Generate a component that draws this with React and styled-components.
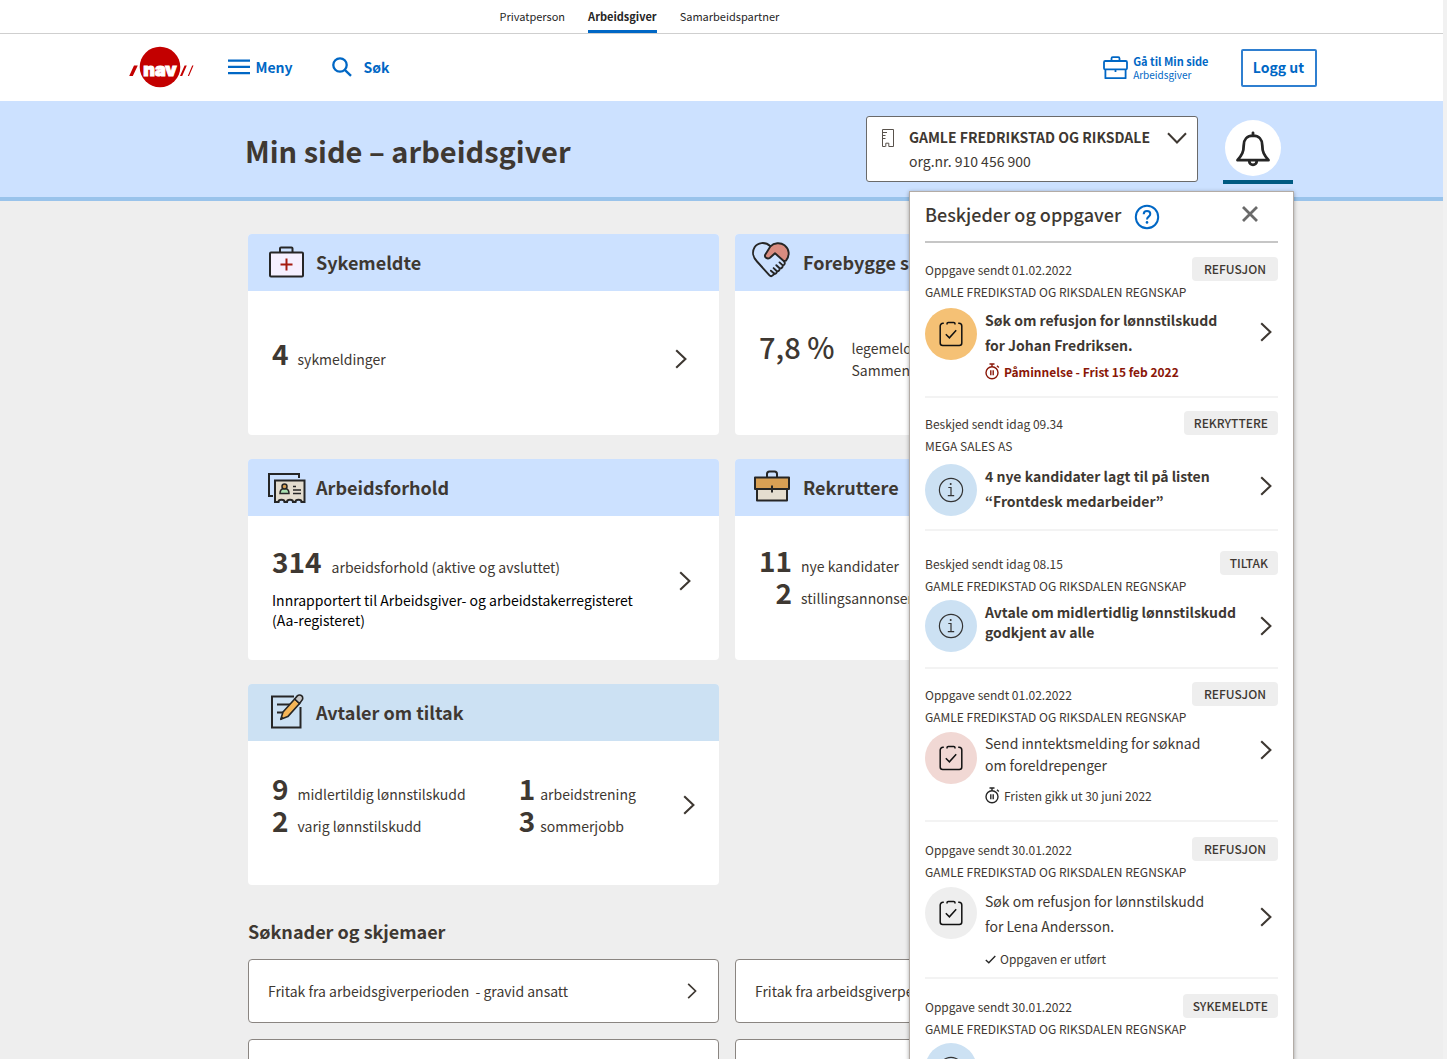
import React from "react";
import styled, { createGlobalStyle, css } from "styled-components";

const font = '"Source Sans Pro", "Noto Sans CJK KR", "Noto Sans", sans-serif';
const ink = "#3e3832";
const blue = "#0067c5";

const GlobalStyle = createGlobalStyle`
  *, *::before, *::after { box-sizing: border-box; }
  body { margin: 0; background: #f1f1f1; color: ${ink}; font-family: ${font}; font-size: 14px; }
  h1, h2, h3, p, ul { margin: 0; padding: 0; font-weight: inherit; }
  ul { list-style: none; }
  a { color: inherit; text-decoration: none; }
  button { font: inherit; color: inherit; cursor: pointer; }
  svg { display: block; flex: none; overflow: visible; }
`;

const Page = styled.div`
  height: 100vh;
  margin-right: 4px;
  overflow-x: hidden;
  overflow-y: auto;
  scrollbar-width: none;
  background: #eeeeee;
`;

/* ---------- Site header ---------- */

const TopBar = styled.div`
  background: #fff;
  border-bottom: 1px solid #cfcfcf;
`;

const HeaderInner = styled.div`
  display: flex;
  align-items: center;
  max-width: 1190px;
  margin: 0 auto;
`;

const Tabs = styled.nav`
  display: flex;
  gap: 23px;
  padding-left: 373px;
`;

const Tab = styled.a`
  height: 33px;
  line-height: 33px;
  font-size: 11px;
  color: #262626;
  border-bottom: 3px solid transparent;
  ${(p) => p.$active && css`
    font-weight: 700;
    border-bottom-color: ${blue};
  `}
`;

const SiteHeader = styled.header`
  background: #fff;
  color: ${blue};
`;

const SiteRow = styled(HeaderInner)`
  height: 67px;
`;

const HeaderButton = styled.button`
  display: flex;
  align-items: center;
  gap: ${(p) => p.$gap}px;
  margin-left: ${(p) => p.$space}px;
  padding: 0 0 2px;
  border: 0;
  background: none;
  font-size: 14px;
  font-weight: 700;
`;

const MySide = styled.a`
  display: flex;
  align-items: center;
  gap: 5px;
  margin-left: auto;
  font-size: 10px;
  line-height: 13px;
`;

const MySideTitle = styled.span`
  display: block;
  font-size: 11px;
  font-weight: 700;
`;

const LogoutButton = styled.button`
  width: 76px;
  height: 38px;
  margin-left: 32px;
  padding: 0 0 2px;
  border: 2px solid #2f7fd0;
  border-radius: 2px;
  background: #fff;
  color: ${blue};
  font-size: 14px;
  font-weight: 700;
`;

/* ---------- Banner ---------- */

const Banner = styled.div`
  display: flex;
  align-items: flex-start;
  height: 100px;
  padding: 15px 150px 0 245px;
  background: #cce1ff;
  border-bottom: 4px solid #99c3eb;
`;

const PageTitle = styled.h1`
  margin-right: auto;
  font-size: 29px;
  line-height: 68px;
  font-weight: 700;
  white-space: nowrap;
`;

const OrgPicker = styled.button`
  display: flex;
  align-items: flex-start;
  width: 332px;
  height: 66px;
  padding: 8px 10px 0 15px;
  border: 1px solid #6a6a6a;
  border-radius: 3px;
  background: #fff;
  text-align: left;
  line-height: 24px;
  white-space: nowrap;
`;

const OrgText = styled.span`
  flex: 1;
  margin-left: 15px;
`;

const OrgName = styled.strong`
  display: block;
  font-weight: 700;
`;

const IconSlot = styled.span`
  display: flex;
  align-items: center;
  height: 26px;
`;

const BellArea = styled.div`
  position: relative;
  margin-left: 25px;
`;

const BellButton = styled.button`
  display: block;
  width: 70px;
  height: 68px;
  padding: 4px 0 0 2px;
  border: 0;
  border-bottom: 4px solid #005b82;
  background: none;
`;

const BellCircle = styled.span`
  display: flex;
  align-items: center;
  justify-content: center;
  width: 56px;
  height: 56px;
  margin-bottom: 4px;
  border-radius: 50%;
  background: #fff;
`;

/* ---------- Notification panel ---------- */

const Panel = styled.section`
  position: absolute;
  top: calc(100% + 7px);
  right: -1px;
  z-index: 5;
  width: 385px;
  padding: 0 15px;
  background: #fff;
  border: 1px solid #b3aca6;
  box-shadow: 0 1px 4px rgba(0, 0, 0, 0.35);
`;

const PanelHeader = styled.div`
  display: flex;
  align-items: center;
  height: 51px;
  padding: 0 19px 6px 0;
  border-bottom: 2px solid #c6c6c6;
`;

const PanelTitle = styled.h2`
  font-size: 18px;
  line-height: 24px;
  font-weight: 500;
`;

const IconButton = styled.button`
  display: flex;
  margin-left: ${(p) => p.$space};
  padding: ${(p) => p.$lower || 0}px 0 0;
  border: 0;
  background: none;
`;

const Message = styled.li`
  padding: ${(p) => p.$top}px 0 ${(p) => p.$bottom}px;
  border-bottom: 2px solid #f3f3f3;
`;

const MessageMeta = styled.div`
  display: flex;
  align-items: center;
  justify-content: space-between;
  height: 24px;
  font-size: 12px;
`;

const Tag = styled.span`
  min-width: ${(p) => (p.$wide ? "86px" : "0")};
  padding: 0 10px;
  border-radius: 4px;
  background: #eeeeee;
  font-size: 12px;
  line-height: 24px;
  font-weight: 500;
  text-align: center;
`;

const MessageOrg = styled.p`
  font-size: 12px;
  line-height: 22px;
  white-space: nowrap;
`;

const MessageLink = styled.a`
  display: flex;
  align-items: flex-start;
  margin-top: ${(p) => p.$gap}px;
  padding-right: 6px;
`;

const circleColors = {
  orange: "#f5c175",
  blue: "#cce1f3",
  red: "#f1d8d4",
  grey: "#eeeeee",
};

const MessageIcon = styled.span`
  display: flex;
  align-items: center;
  justify-content: center;
  flex: none;
  width: 52px;
  height: 52px;
  border-radius: 50%;
  background: ${(p) => circleColors[p.$color]};
`;

const MessageBody = styled.div`
  flex: 1;
  padding: ${(p) => p.$inset}px 0 0 8px;
`;

const MessageTitle = styled.h3`
  font-size: 14px;
  line-height: ${(p) => p.$line}px;
  font-weight: ${(p) => (p.$read ? 400 : 700)};
  white-space: pre-line;
`;

const MessageStatus = styled.p`
  display: flex;
  align-items: center;
  gap: 4px;
  margin-top: ${(p) => (p.$urgent ? 4 : 10)}px;
  font-size: 12px;
  line-height: 20px;
  ${(p) => p.$urgent && css`
    color: #8a1708;
    font-weight: 700;
  `}
`;

const MessageArrow = styled.span`
  margin-top: ${(p) => p.$drop}px;
`;

/* ---------- Cards ---------- */

const Content = styled.main`
  padding: 33px 237px 0 248px;
`;

const CardGrid = styled.div`
  display: grid;
  grid-template-columns: 1fr 1fr;
  gap: 24px 16px;
`;

const Card = styled.article`
  overflow: hidden;
  border-radius: 4px;
  background: #fff;
`;

const CardHeader = styled.div`
  display: flex;
  align-items: center;
  gap: 12px;
  height: 57px;
  padding: 0 20px 1px;
  background: ${(p) => (p.$muted ? "#cce1f3" : "#cce1ff")};
`;

const CardIcon = styled.span`
  display: flex;
  justify-content: center;
  width: 36px;
`;

const CardTitle = styled.h2`
  font-size: 18px;
  line-height: 26px;
  font-weight: 700;
  white-space: nowrap;
`;

const CardBody = styled.a`
  display: flex;
  align-items: flex-start;
  height: 144px;
  padding: ${(p) => p.$top}px ${(p) => p.$end}px 0 24px;
`;

const CardArrow = styled.span`
  align-self: flex-start;
  margin-left: auto;
  padding-top: ${(p) => p.$drop}px;
`;

const StatList = styled.div`
  display: grid;
  grid-template-columns: auto auto;
  align-items: ${(p) => (p.$block ? "start" : "baseline")};
  justify-content: start;
  column-gap: ${(p) => p.$gap}px;
  margin-right: ${(p) => p.$after || 0}px;
`;

const StatNumber = styled.strong`
  font-size: ${(p) => (p.$light ? 29 : 28)}px;
  line-height: 31px;
  font-weight: ${(p) => (p.$light ? 500 : 700)};
  text-align: right;
  white-space: nowrap;
`;

const StatLabel = styled.span`
  padding-top: ${(p) => (p.$block ? 6 : 0)}px;
  font-size: 14px;
  line-height: 22px;
  white-space: pre;
`;

const StatNote = styled.p`
  margin-top: 12px;
  color: #000;
  font-size: 14px;
  line-height: 20px;
`;

const FormsTitle = styled.h2`
  margin: 33px 0 14px;
  font-size: 18px;
  line-height: 27px;
  font-weight: 700;
`;

const FormGrid = styled.div`
  display: grid;
  grid-template-columns: 1fr 1fr;
  gap: 16px;
`;

const FormLink = styled.a`
  display: flex;
  align-items: center;
  justify-content: space-between;
  height: 64px;
  padding: 0 21px 1px 19px;
  border: 1px solid #8a8581;
  border-radius: 4px;
  background: #fff;
  white-space: pre;
`;

/* ---------- Icons ---------- */

const Chevron = ({ w = 12, h = 20 }) => (
  <svg width={w} height={h} viewBox="0 0 12 20" fill="none" stroke={ink} strokeWidth="2.1">
    <path d="M1.2 1.2 10.4 10 1.2 18.8" />
  </svg>
);

const ChevronDown = () => (
  <svg width="20" height="12" viewBox="0 0 20 12" fill="none" stroke={ink} strokeWidth="2">
    <path d="M1 1.3 10 10.5 19 1.3" />
  </svg>
);

const Logo = () => (
  <svg width="66" height="42" viewBox="-1 1 66 42" role="img" aria-label="nav">
    <circle cx="32" cy="21" r="20.3" fill="#c30000" />
    <path d="M6 19.5h3.8L4.8 30H1.2zM56.6 19.5h2.2L54.2 30H52zM64.2 19.5h1.3L61 30h-1.2z" fill="#c30000" />
    <text x="32" y="29.5" textAnchor="middle" fill="#fff" stroke="#fff" strokeWidth="1" fontFamily="Inter, sans-serif" fontWeight="900" fontSize="18">nav</text>
  </svg>
);

const MenuIcon = () => (
  <svg width="22" height="16" viewBox="0 0 22 16" fill={blue}>
    <path d="M0 .5h22v2.2H0zM0 6.8h22V9H0zM0 13.1h22v2.2H0z" />
  </svg>
);

const SearchIcon = () => (
  <svg width="20" height="20" viewBox="0 0 20 20" fill="none" stroke={blue} strokeWidth="2.3">
    <circle cx="8" cy="8" r="6.7" />
    <path d="m12.8 12.8 6.2 6" />
  </svg>
);

const BriefcaseLine = () => (
  <svg width="25" height="24" viewBox="0 0 25 24" fill="none" stroke={blue} strokeWidth="1.8" strokeLinejoin="round">
    <rect x="1" y="5" width="23" height="8.4" rx="1.2" />
    <path d="M2.4 13.4V22.2h20.2V13.4M8.5 5V2.4q0-1.2 1.2-1.2h5.6q1.2 0 1.2 1.2V5M12.5 13v3" />
  </svg>
);

const BuildingIcon = () => (
  <svg width="12" height="18" viewBox="0 0 12 18" fill="none" stroke="#59524c" strokeWidth="1">
    <path d="M3.5 17.5H.5V.5h11v17H6.8v-3.3H3.8v3.3M.5 3.5H5M.5 6.5h3M.5 9.5h3" />
  </svg>
);

const BellIcon = () => (
  <svg width="36" height="36" viewBox="0 -1 36 36" fill="none" stroke="#262626" strokeWidth="2.8" strokeLinejoin="round" strokeLinecap="round">
    <path d="M18 1.8v3M18 4.6c-6 0-9.3 4.3-9.3 9.8 0 6.5-1.7 9.6-6.2 14.8h31c-4.5-5.2-6.2-8.3-6.2-14.8 0-5.5-3.3-9.8-9.3-9.8z" />
    <path d="M14.3 30.2a3.7 3.7 0 0 0 7.4 0" />
  </svg>
);

const HelpIcon = () => (
  <svg width="26" height="26" viewBox="0 0 26 26" fill="none" stroke={blue} strokeWidth="2">
    <circle cx="13" cy="13" r="11.2" />
    <path d="M9.7 10.3c0-2 1.4-3.3 3.3-3.3s3.3 1.2 3.3 3c0 2.6-3.3 2.7-3.3 5.5" />
    <circle cx="13" cy="18.4" r="1.3" fill={blue} stroke="none" />
  </svg>
);

const CloseIcon = () => (
  <svg width="18" height="18" viewBox="0 0 18 18" stroke="#6a6a6a" strokeWidth="2.8">
    <path d="m2 2 14 14M16 2 2 16" />
  </svg>
);

const TaskIcon = () => (
  <svg width="24" height="26" viewBox="0 0 24 26" fill="none" stroke="#111" strokeWidth="1.5">
    <path d="M4.8 2.3H4A2.8 2.8 0 0 0 1.2 5.1V22A2.5 2.5 0 0 0 3.7 24.5H20.3A2.5 2.5 0 0 0 22.8 22V5.1A2.8 2.8 0 0 0 20 2.3H19.2" />
    <path d="M8 3.6V2.8Q8 1.5 9.3 1.5H14.7Q16 1.5 16 2.8V3.6M6.8 13.3l3.6 3.5 6.8-7.6" />
  </svg>
);

const InfoIcon = () => (
  <svg width="26" height="26" viewBox="0 0 26 26" fill="none" stroke="#333" strokeWidth="1.2">
    <circle cx="13" cy="13" r="11.6" />
    <path d="M10.3 10.5H13V18.6M9.8 18.6h6.4" />
    <circle cx="12.7" cy="7" r="1" fill="#333" stroke="none" />
  </svg>
);

const StopwatchIcon = ({ color }) => (
  <svg width="15" height="17" viewBox="0 1 15 17" fill="none" stroke={color} strokeWidth="1.4">
    <circle cx="7" cy="9.8" r="6" />
    <path d="M4.5 1h5M7 1v2.8M12 2.8l1.8 1.7M5.8 7.3v5M8.2 7.3v5" />
  </svg>
);

const CheckIcon = () => (
  <svg width="11" height="9" viewBox="0 0 11 9" fill="none" stroke="#262626" strokeWidth="1.4">
    <path d="m.8 5 3 2.7L10.3 1" />
  </svg>
);

const FirstAidIcon = () => (
  <svg width="36" height="32" viewBox="0 0 36 32" fill="none" stroke="#262626" strokeWidth="2" strokeLinejoin="round">
    <path d="M12 6.5V2.5Q12 1.5 13 1.500H23.500Q24.500 1.500 24.500 2.500V6.500" />
    <rect x="2" y="6.500" width="33" height="24" rx="1" fill="#f5f0ff" />
    <path d="M18.500 12.500v12M12.500 18.500h12" stroke="#a51b10" />
  </svg>
);

const HandshakeHeart = () => (
  <svg width="38" height="36" viewBox="2 2 38 36" fill="none" stroke="#262626" strokeWidth="1.9" strokeLinejoin="round" strokeLinecap="round">
    <path d="M18.5 4.3C13-.8 5.5.6 2.6 5.3-.2 10 1 15.500 5 19.500L17.300 33.200Q19 35 20.700 33.400L22.500 31.700" />
    <path fill="#d98c80" d="M18.500 4.300C22 .6 28.500.2 32.500 3.200 37.500 7 38 13.600 34 18.600L32 19.200 23 11.300 18 15.700C15.500 17.500 12 15.500 13.200 12.700z" />
    <path d="M32 19.200c1.600 1.500.8 3.800-1.200 4.200 0 2-1.400 3.300-3.200 2.900.2 2-1 3.200-2.700 2.900.2 1.700-1 2.700-2.400 2.500M30.800 23.400l-3.300-3M27.600 26.300l-3.300-3.100M24.900 29.200l-3.300-3.100M22.500 31.700l-3.600-3" />
  </svg>
);

const BadgeCards = () => (
  <svg width="38" height="32" viewBox="-1 -1 38 32" fill="none" stroke="#262626" strokeWidth="2">
    <path d="M5 24H1V2H31V6" />
    <path fill="#e4ddcf" d="M7 8.500H36.500V30H33.500C33.500 27 27.500 27 27.500 30H25C25 27 19 27 19 30H16.500C16.500 27 10.500 27 10.500 30H7z" />
    <path fill="#a9dfb0" strokeWidth="1.500" d="M12 21.500c0-4 2-5 4.500-5s4.500 1 4.500 5z" />
    <circle cx="16.500" cy="14.500" r="2.500" fill="#d9a054" strokeWidth="1.500" />
    <path strokeWidth="1.500" d="M25 14.500h3M25 18h8M25 21.500h8" />
  </svg>
);

const BriefcaseColor = () => (
  <svg width="36" height="32" viewBox="1 1 36 32" fill="none" stroke="#262626" strokeWidth="2" strokeLinejoin="round">
    <path d="M13 7.500V4Q13 1.500 15.500 1.500H20.500Q23 1.500 23 4V7.500" />
    <path fill="#e4ddcf" d="M3 19H33V30.500H3z" />
    <path fill="#d9a054" d="M1 7.500H35V19H1z" />
    <path d="M18 15.500v7" />
  </svg>
);

const NotePencil = () => (
  <svg width="34" height="36" viewBox="-1 1 34 36" fill="none" stroke="#262626" strokeWidth="2">
    <path d="M24 3.500H2V34.500H30.500V14M7 11.500h13M7 19.500h6" />
    <path fill="#f5b556" strokeWidth="1.600" strokeLinejoin="round" d="M10.800 26.300 13 19 24.700 6 29.600 10.500 17.800 23.600z" />
    <path fill="#c6c6c6" strokeWidth="1.600" d="M24.700 6 27.300 2.900a3 3 0 0 1 4.500 4.500L29.600 10.500z" />
    <path strokeWidth="1.600" d="m10.800 26.300 2-2" />
  </svg>
);

/* ---------- Data ---------- */

const COMPANY = "GAMLE FREDIKSTAD OG RIKSDALEN REGNSKAP";

const messages = [
  { date: "Oppgave sendt 01.02.2022", tag: "REFUSJON", org: COMPANY, color: "orange", icon: TaskIcon,
    title: "Søk om refusjon for lønnstilskudd\nfor Johan Fredriksen.", line: 25, inset: 0,
    status: "Påminnelse - Frist 15 feb 2022", statusIcon: "watch", urgent: true,
    top: 14, gap: 5, bottom: 14, arrow: 14 },
  { date: "Beskjed sendt idag 09.34", tag: "REKRYTTERE", org: "MEGA SALES AS", color: "blue", icon: InfoIcon,
    title: "4 nye kandidater lagt til på listen\n“Frontdesk medarbeider”", line: 25, inset: 0,
    top: 13, gap: 7, bottom: 13, arrow: 12 },
  { date: "Beskjed sendt idag 08.15", tag: "TILTAK", org: COMPANY, color: "blue", icon: InfoIcon,
    title: "Avtale om midlertidlig lønnstilskudd\ngodkjent av alle", line: 20, inset: 2,
    top: 20, gap: 3, bottom: 15, arrow: 16 },
  { date: "Oppgave sendt 01.02.2022", tag: "REFUSJON", org: COMPANY, color: "red", icon: TaskIcon,
    title: "Send inntektsmelding for søknad\nom foreldrepenger", line: 22, inset: 0, read: true,
    status: "Fristen gikk ut 30 juni 2022", statusIcon: "watch",
    top: 13, gap: 4, bottom: 14, arrow: 8 },
  { date: "Oppgave sendt 30.01.2022", tag: "REFUSJON", org: COMPANY, color: "grey", icon: TaskIcon,
    title: "Søk om refusjon for lønnstilskudd\nfor Lena Andersson.", line: 25, inset: 2, read: true,
    status: "Oppgaven er utført", statusIcon: "check",
    top: 15, gap: 4, bottom: 8, arrow: 20 },
  { date: "Oppgave sendt 30.01.2022", tag: "SYKEMELDTE", org: COMPANY, color: "blue", icon: InfoIcon,
    title: "", line: 25, inset: 0, top: 15, gap: 3, bottom: 14, arrow: 16 },
];

const forms = [
  "Fritak fra arbeidsgiverperioden  - gravid ansatt",
  "Fritak fra arbeidsgiverperioden  - kronisk syk ansatt",
  "Inntektsmelding",
  "Refusjon av sykepenger",
];

function MessageItem({ item }) {
  const Icon = item.icon;
  return (
    <Message $top={item.top} $bottom={item.bottom}>
      <MessageMeta>
        <span>{item.date}</span>
        <Tag $wide={item.tag === "REFUSJON"}>{item.tag}</Tag>
      </MessageMeta>
      <MessageOrg>{item.org}</MessageOrg>
      <MessageLink href="#" $gap={item.gap}>
        <MessageIcon $color={item.color}><Icon /></MessageIcon>
        <MessageBody $inset={item.inset}>
          <MessageTitle $line={item.line} $read={item.read}>{item.title}</MessageTitle>
          {item.status && (
            <MessageStatus $urgent={item.urgent}>
              {item.statusIcon === "watch"
                ? <StopwatchIcon color={item.urgent ? "#8a1708" : "#262626"} />
                : <CheckIcon />}
              {item.status}
            </MessageStatus>
          )}
        </MessageBody>
        <MessageArrow $drop={item.arrow}><Chevron /></MessageArrow>
      </MessageLink>
    </Message>
  );
}

function StatCard({ icon, title, muted, top, end, arrow, children }) {
  return (
    <Card>
      <CardHeader $muted={muted}>
        <CardIcon>{icon}</CardIcon>
        <CardTitle>{title}</CardTitle>
      </CardHeader>
      <CardBody href="#" $top={top} $end={end}>
        {children}
        <CardArrow $drop={arrow}><Chevron /></CardArrow>
      </CardBody>
    </Card>
  );
}

export default function App() {
  return (
    <>
      <GlobalStyle />
      <Page>
        <TopBar>
          <HeaderInner>
            <Tabs>
              <Tab href="#">Privatperson</Tab>
              <Tab href="#" $active>Arbeidsgiver</Tab>
              <Tab href="#">Samarbeidspartner</Tab>
            </Tabs>
          </HeaderInner>
        </TopBar>
        <SiteHeader>
          <SiteRow>
            <a href="#"><Logo /></a>
            <HeaderButton $gap={6} $space={35}><MenuIcon />Meny</HeaderButton>
            <HeaderButton $gap={12} $space={39}><SearchIcon />Søk</HeaderButton>
            <MySide href="#">
              <BriefcaseLine />
              <span><MySideTitle>Gå til Min side</MySideTitle>Arbeidsgiver</span>
            </MySide>
            <LogoutButton>Logg ut</LogoutButton>
          </SiteRow>
        </SiteHeader>

        <Banner>
          <PageTitle>Min side – arbeidsgiver</PageTitle>
          <OrgPicker aria-haspopup="listbox">
            <IconSlot><BuildingIcon /></IconSlot>
            <OrgText>
              <OrgName>GAMLE FREDRIKSTAD OG RIKSDALE</OrgName>
              org.nr. 910 456 900
            </OrgText>
            <IconSlot><ChevronDown /></IconSlot>
          </OrgPicker>
          <BellArea>
            <BellButton aria-label="Varsler" aria-expanded="true">
              <BellCircle><BellIcon /></BellCircle>
            </BellButton>
            <Panel>
              <PanelHeader>
                <PanelTitle>Beskjeder og oppgaver</PanelTitle>
                <IconButton $space="13px" $lower={6} aria-label="Hjelp"><HelpIcon /></IconButton>
                <IconButton $space="auto" aria-label="Lukk"><CloseIcon /></IconButton>
              </PanelHeader>
              <ul>
                {messages.map((item, i) => <MessageItem key={i} item={item} />)}
              </ul>
            </Panel>
          </BellArea>
        </Banner>

        <Content>
          <CardGrid>
            <StatCard icon={<FirstAidIcon />} title="Sykemeldte" top={47} end={32} arrow={11}>
              <StatList $gap={9}>
                <StatNumber>4</StatNumber><StatLabel>sykmeldinger</StatLabel>
              </StatList>
            </StatCard>
            <StatCard icon={<HandshakeHeart />} title="Forebygge sykefravær" top={40} end={32} arrow={18}>
              <StatList $gap={17} $block>
                <StatNumber $light>7,8 %</StatNumber>
                <StatLabel $block>{"legemeldt sykefravær\nSammenlign med bransjen"}</StatLabel>
              </StatList>
            </StatCard>
            <StatCard icon={<BadgeCards />} title="Arbeidsforhold" top={30} end={28} arrow={25}>
              <div>
                <StatList $gap={10}>
                  <StatNumber>314</StatNumber><StatLabel>arbeidsforhold (aktive og avsluttet)</StatLabel>
                </StatList>
                <StatNote>Innrapportert til Arbeidsgiver- og arbeidstakerregisteret<br />(Aa-registeret)</StatNote>
              </div>
            </StatCard>
            <StatCard icon={<BriefcaseColor />} title="Rekruttere" top={29} end={28} arrow={26}>
              <StatList $gap={9}>
                <StatNumber>11</StatNumber><StatLabel>nye kandidater</StatLabel>
                <StatNumber>2</StatNumber><StatLabel>stillingsannonser</StatLabel>
              </StatList>
            </StatCard>
            <StatCard icon={<NotePencil />} title="Avtaler om tiltak" muted top={32} end={24} arrow={22}>
              <StatList $gap={9} $after={53}>
                <StatNumber>9</StatNumber><StatLabel>midlertildig lønnstilskudd</StatLabel>
                <StatNumber>2</StatNumber><StatLabel>varig lønnstilskudd</StatLabel>
              </StatList>
              <StatList $gap={5}>
                <StatNumber>1</StatNumber><StatLabel>arbeidstrening</StatLabel>
                <StatNumber>3</StatNumber><StatLabel>sommerjobb</StatLabel>
              </StatList>
            </StatCard>
          </CardGrid>

          <FormsTitle>Søknader og skjemaer</FormsTitle>
          <FormGrid>
            {forms.map((label) => (
              <FormLink key={label} href="#">{label}<Chevron w={10} h={16} /></FormLink>
            ))}
          </FormGrid>
        </Content>
      </Page>
    </>
  );
}
